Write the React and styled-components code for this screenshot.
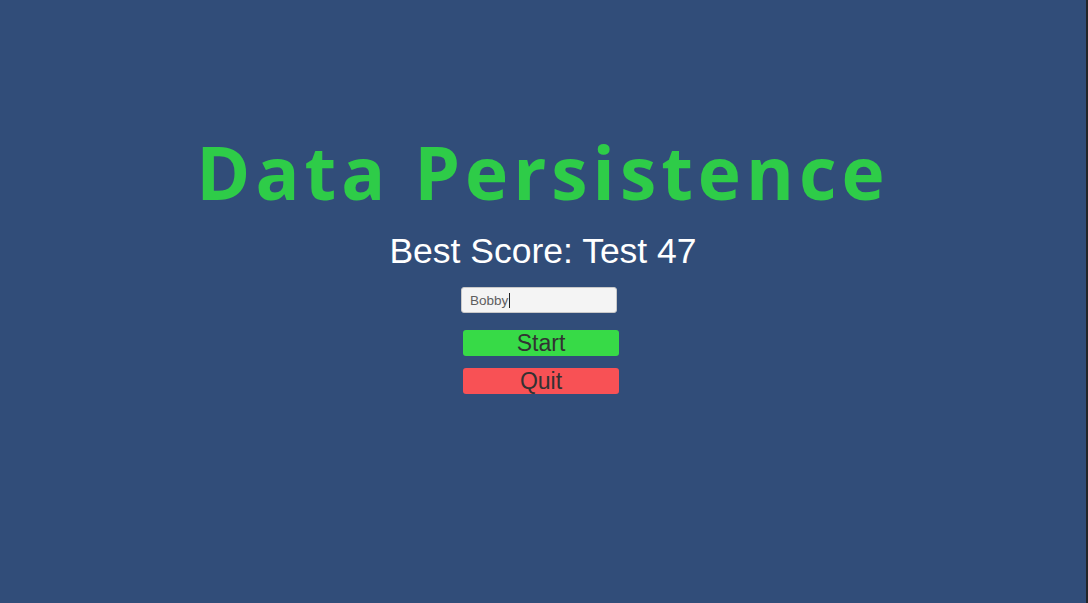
import React, { useState } from 'react'
import styled, { createGlobalStyle } from 'styled-components'

const GlobalStyle = createGlobalStyle`
  html, body {
    margin: 0;
    padding: 0;
    background: #314d79;
  }
`

const Screen = styled.div`
  width: 1088px;
  height: 603px;
  display: flex;
  background: #314d79;
  overflow: hidden;
`

const Stage = styled.div`
  flex: 1;
  display: flex;
  flex-direction: column;
  align-items: center;
  padding-top: 124px;
`

const Edge = styled.div`
  width: 2px;
  background: #232528;
`

const Title = styled.h1`
  margin: 0;
  font-family: "Open Sans", "Liberation Sans", sans-serif;
  font-weight: 700;
  font-size: 73px;
  line-height: 96px;
  letter-spacing: 5px;
  color: #2ecc48;
`

const Score = styled.div`
  margin-top: 9px;
  font-family: "Liberation Sans", Arial, sans-serif;
  font-size: 35.5px;
  line-height: 44px;
  color: #ffffff;
`

const NameBox = styled.div`
  margin-top: 14px;
  margin-right: 8px;
  width: 156px;
  height: 26px;
  box-sizing: border-box;
  background: #f4f4f4;
  border: 1px solid #c9c9c9;
  border-radius: 3px;
  display: flex;
  align-items: center;
  padding-left: 8px;
  font-family: "Liberation Sans", Arial, sans-serif;
  font-size: 13.5px;
  color: #5e5e5e;
`

const Caret = styled.span`
  display: inline-block;
  width: 1px;
  height: 15px;
  margin-left: 1px;
  background: #222;
`

const Button = styled.button`
  margin-top: ${(p) => p.$gap}px;
  margin-right: 4px;
  width: 156px;
  height: 26px;
  border: none;
  border-radius: 3px;
  background: ${(p) => p.$bg};
  font-family: "Liberation Sans", Arial, sans-serif;
  font-size: 23px;
  line-height: 26px;
  color: #323232;
  padding: 0;
  cursor: pointer;
`

export default function App() {
  const [name] = useState('Bobby')
  return (
    <>
      <GlobalStyle />
      <Screen>
        <Stage>
          <Title>Data Persistence</Title>
          <Score>Best Score: Test 47</Score>
          <NameBox>
            {name}
            <Caret />
          </NameBox>
          <Button $gap={17} $bg="#37da47">Start</Button>
          <Button $gap={12} $bg="#f85155">Quit</Button>
        </Stage>
        <Edge />
      </Screen>
    </>
  )
}
